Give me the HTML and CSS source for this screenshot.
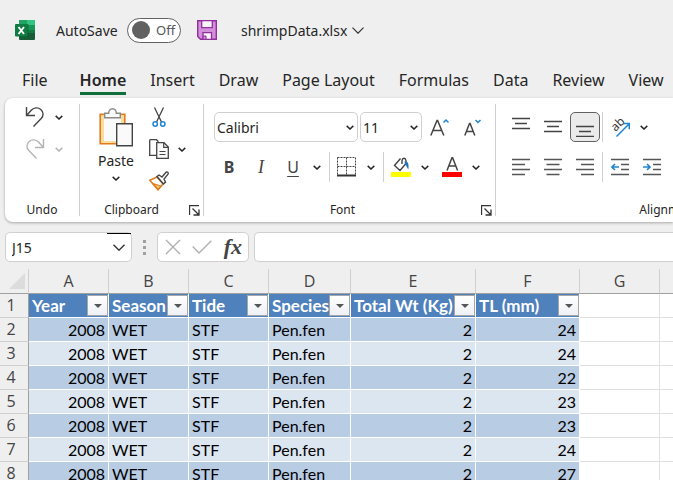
FILE: index.html
```html
<!DOCTYPE html>
<html lang="en">
<head>
<meta charset="utf-8">
<title>shrimpData.xlsx</title>
<link rel="stylesheet" href="styles.css">
</head>
<body>
<svg class="defs" aria-hidden="true">
  <symbol id="chev" viewBox="0 0 8 5"><path d="M.7.9 4 4 7.3.9" fill="none" stroke="currentColor" stroke-width="1.5"/></symbol>
  <symbol id="launch" viewBox="0 0 11 11"><path d="M.5 10V.5H10M3.5 3.5l6 6M10 4.500V10H4.500" fill="none" stroke="#333" stroke-width="1.300"/></symbol>
</svg>

<header class="titlebar">
  <svg class="logo" width="20" height="20" viewBox="0 0 20 20">
    <rect x="4" y="0" width="16" height="20" rx="1" fill="#185c37"/>
    <path d="M4 1a1 1 0 0 1 1-1h7v5.500H4z" fill="#21a366"/>
    <path d="M12 0h7a1 1 0 0 1 1 1v4.500h-8z" fill="#33c481"/>
    <path d="M4 5.500h8V13H4z" fill="#107c41"/>
    <path d="M12 5.500h8V13h-8z" fill="#17965a"/>
    <path d="M12 10h8v3h-8z" fill="#107c41"/>
    <path d="M4 4h9.500v13H4z" fill="#0b4a2b" opacity=".5"/>
    <rect x="0" y="4" width="12.500" height="12.500" rx="1" fill="#107c41"/>
    <path d="M3.500 7l5.500 7M9 7l-5.500 7" stroke="#fff" stroke-width="1.900" fill="none"/>
  </svg>
  <label class="autosave" for="autosave">AutoSave</label>
  <span class="toggle"><input id="autosave" type="checkbox" role="switch"><span class="toggle-text">Off</span></span>
  <button class="save" aria-label="Save">
    <svg width="20" height="20" viewBox="0 0 20 20">
      <path d="M.7.7h18.600v18.600H3.500L.7 16.500z" fill="#d48fdb" stroke="#922f9e" stroke-width="1.400"/>
      <path d="M4.700.7h10.600v7H4.700z" fill="#f7f3f8" stroke="#922f9e" stroke-width="1.300"/>
      <path d="M6 19.300v-6.600h8.500v6.600z" fill="#f7f3f8" stroke="#922f9e" stroke-width="1.300"/>
      <path d="M6 16h3v3.300H6z" fill="#d48fdb" stroke="#922f9e" stroke-width="1"/>
    </svg>
  </button>
  <button class="filename">shrimpData.xlsx
    <svg width="12" height="7" viewBox="0 0 12 7"><path d="M.5.700 6 6.200 11.500.7" fill="none" stroke="#333" stroke-width="1.200"/></svg>
  </button>
</header>

<nav class="tabs">
  <a class="tab file" href="#file">File</a>
  <a class="tab active" href="#home">Home</a>
  <a class="tab" href="#insert">Insert</a>
  <a class="tab" href="#draw">Draw</a>
  <a class="tab" href="#layout">Page Layout</a>
  <a class="tab" href="#formulas">Formulas</a>
  <a class="tab" href="#data">Data</a>
  <a class="tab" href="#review">Review</a>
  <a class="tab" href="#view">View</a>
</nav>

<section class="ribbon">
  <div class="group undo">
    <div class="body stack">
      <div class="row">
        <button class="tool" aria-label="Undo"><svg width="20" height="22" viewBox="0 0 20 22"><path d="M1.500 1v8.500H10M1.500 9.500 6.500 4C9 1.500 13 1 15.800 3.500c3 2.700 2.900 6.500.4 9L8.500 20.500" fill="none" stroke="#444" stroke-width="1.400"/></svg></button>
        <button class="drop" aria-label="Undo list"><svg width="8" height="5"><use href="#chev"/></svg></button>
      </div>
      <div class="row faded">
        <button class="tool" aria-label="Redo"><svg width="20" height="22" viewBox="0 0 20 22"><path d="M18.500 1v8.500H10M18.500 9.500 13.500 4C11 1.500 7 1 4.200 3.500c-3 2.700-2.900 6.500-.4 9L11.500 20.500" fill="none" stroke="currentColor" stroke-width="1.400"/></svg></button>
        <button class="drop" aria-label="Redo list"><svg width="8" height="5"><use href="#chev"/></svg></button>
      </div>
    </div>
    <div class="foot"><span class="caption">Undo</span></div>
  </div>

  <div class="group clipboard">
    <div class="body clip">
      <button class="paste">
        <svg width="34" height="39" viewBox="0 0 34 39">
          <path d="M1.200 6.200h24.600v29.600H1.200z" fill="#fbdc9b" stroke="#e07b1f" stroke-width="1.600"/>
          <path d="M5 8h17v25H5z" fill="#fafafa"/>
          <path d="M5.700 9.800V5.200h4c0-2.400 1.500-4.500 3.800-4.500s3.800 2.100 3.800 4.500h4v4.600z" fill="#fafafa" stroke="#8a8a8a" stroke-width="1.400"/>
          <path d="M17.700 15.700h15.600v22H17.700z" fill="#fafafa" stroke="#444" stroke-width="1.400"/>
        </svg>
        <span>Paste</span>
        <svg width="8" height="5"><use href="#chev"/></svg>
      </button>
      <div class="stack">
        <div class="row">
          <button class="tool" aria-label="Cut"><svg width="14" height="20" viewBox="0 0 14 20"><path d="M2.500.5 9.500 15M11.500.5 4.500 15" fill="none" stroke="#444" stroke-width="1.300"/><circle cx="3.200" cy="17" r="2.200" fill="#fff" stroke="#1e86d0" stroke-width="1.500"/><circle cx="10.800" cy="17" r="2.200" fill="#fff" stroke="#1e86d0" stroke-width="1.500"/></svg></button>
        </div>
        <div class="row">
          <button class="tool" aria-label="Copy"><svg width="20" height="20" viewBox="0 0 20 20"><path d="M.7.700h6.300M.7.700V16.300H7M7 .7h.5l2 2" fill="none" stroke="#444" stroke-width="1.300"/><path d="M7.700 3.700h7.300l4.300 4.300v11.300H7.700z" fill="#fafafa" stroke="#444" stroke-width="1.300"/><path d="M14.700 4v4.300h4.600M10.500 12.500h6M10.500 15.500h6" fill="none" stroke="#444" stroke-width="1.200"/></svg></button>
          <button class="drop" aria-label="Copy options"><svg width="8" height="5"><use href="#chev"/></svg></button>
        </div>
        <div class="row">
          <button class="tool" aria-label="Format Painter"><svg width="20" height="20" viewBox="0 0 20 20"><path d="M8 6 .8 9.200 9 18.800l5-5.800z" fill="#fff" stroke="#e07b1f" stroke-width="1.500"/><path d="M4 12.500 11.800 15 9 18.500z" fill="#fbc96f" stroke="#e07b1f" stroke-width="1.200"/><path d="M8 5.500 10 4l3 2 4-4.800c1.500-.8 2.800.6 2 2L15 8l1.500 3-2 2z" fill="#fff" stroke="#444" stroke-width="1.400"/></svg></button>
        </div>
      </div>
    </div>
    <div class="foot"><span class="caption">Clipboard</span><button class="launcher" aria-label="Clipboard settings"><svg width="11" height="11"><use href="#launch"/></svg></button></div>
  </div>

  <div class="group font">
    <div class="body lines">
      <div class="row">
        <label class="combo wide"><select aria-label="Font"><option>Calibri</option></select><svg width="8" height="5"><use href="#chev"/></svg></label>
        <label class="combo"><select aria-label="Font size"><option>11</option></select><svg width="8" height="5"><use href="#chev"/></svg></label>
        <button class="tool sizer" aria-label="Increase Font Size"><svg width="20" height="18" viewBox="0 0 20 18"><path d="M.8 17.500 7 2.500h.6l6.200 15M3 12.500h8.600" fill="none" stroke="#444" stroke-width="1.500"/><path d="M13.500 4.500 16 2l2.500 2.500" fill="none" stroke="#1e86d0" stroke-width="1.500"/></svg></button>
        <button class="tool sizer" aria-label="Decrease Font Size"><svg width="18" height="18" viewBox="0 0 18 18"><path d="M.8 17.500 5.500 5.500h.6l4.700 12M2.500 13.500h6.600" fill="none" stroke="#444" stroke-width="1.500"/><path d="M11.500 2 14 4.500 16.500 2" fill="none" stroke="#1e86d0" stroke-width="1.500"/></svg></button>
      </div>
      <div class="row">
        <button class="tool letter bold">B</button>
        <button class="tool letter italic">I</button>
        <button class="tool letter under">U</button>
        <button class="drop" aria-label="Underline styles"><svg width="8" height="5"><use href="#chev"/></svg></button>
        <span class="sep gap"></span>
        <button class="tool" aria-label="Borders"><svg width="20" height="20" viewBox="0 0 20 20"><path d="M.5.5h18M.5 9.500h18M.5.5v17M9.500.5v17M18.500.5v17" fill="none" stroke="#444" stroke-dasharray="2 1"/><path d="M0 18.500h19" stroke="#333" stroke-width="2"/></svg></button>
        <button class="drop" aria-label="Border styles"><svg width="8" height="5"><use href="#chev"/></svg></button>
        <span class="sep gap"></span>
        <button class="tool" aria-label="Fill Color"><svg width="20" height="20" viewBox="0 0 20 20"><path d="M0 15h20v5H0z" fill="#ff0"/><path d="M9.500 1.500 3.500 8.500l5.500 5 6-7V3.500c-.5-3-3.500-3-4 0v3.500" fill="#fff" stroke="#444" stroke-width="1.400"/><path d="M13.500 4.500c3-.2 4 1.500 4 3.500v4c-1.700-.5-1.500-3.500-3.500-4.500z" fill="#1e74bc"/></svg></button>
        <button class="drop" aria-label="Fill colors"><svg width="8" height="5"><use href="#chev"/></svg></button>
        <button class="tool color" aria-label="Font Color"><svg width="20" height="20" viewBox="0 0 20 20"><path d="M0 15h20v5H0z" fill="#f00"/><path d="M5 13.500 10 .700h.6l5 12.800M7 9h6.600" fill="none" stroke="#444" stroke-width="1.500"/></svg></button>
        <button class="drop" aria-label="Font colors"><svg width="8" height="5"><use href="#chev"/></svg></button>
      </div>
    </div>
    <div class="foot"><span class="caption">Font</span><button class="launcher" aria-label="Font settings"><svg width="11" height="11"><use href="#launch"/></svg></button></div>
  </div>

  <div class="group align">
    <div class="body lines">
      <div class="row">
        <button class="tool" aria-label="Top Align"><svg width="18" height="20" viewBox="0 0 18 20"><path d="M0 1.500h18M3 6.500h12M0 11.500h18" stroke="#444" stroke-width="1.300"/></svg></button>
        <button class="tool" aria-label="Middle Align"><svg width="18" height="20" viewBox="0 0 18 20"><path d="M0 4.500h18M3 9.500h12M0 14.500h18" stroke="#444" stroke-width="1.300"/></svg></button>
        <button class="tool pressed" aria-label="Bottom Align" aria-pressed="true"><svg width="18" height="20" viewBox="0 0 18 20"><path d="M0 9.500h18M3 14.500h12M0 19.500h18" stroke="#444" stroke-width="1.300"/></svg></button>
        <span class="sep"></span>
        <button class="tool" aria-label="Orientation"><svg class="orient" width="20" height="20" viewBox="0 0 20 20"><text class="ab" transform="translate(5.500 15) rotate(-45)">ab</text><path d="M6.500 19.500 19 7M13.500 6.500H19.300V12.300" fill="none" stroke="#1e86d0" stroke-width="1.500"/></svg></button>
        <button class="drop" aria-label="Orientation options"><svg width="8" height="5"><use href="#chev"/></svg></button>
      </div>
      <div class="row">
        <button class="tool" aria-label="Align Left"><svg width="18" height="18" viewBox="0 0 18 18"><path d="M0 1.500h18M0 6.500h13M0 11.500h18M0 16.500h13" stroke="#555" stroke-width="1.500"/></svg></button>
        <button class="tool" aria-label="Center"><svg width="18" height="18" viewBox="0 0 18 18"><path d="M0 1.500h18M2.500 6.500h13M0 11.500h18M2.500 16.500h13" stroke="#555" stroke-width="1.500"/></svg></button>
        <button class="tool" aria-label="Align Right"><svg width="18" height="18" viewBox="0 0 18 18"><path d="M0 1.500h18M5 6.500h13M0 11.500h18M5 16.500h13" stroke="#555" stroke-width="1.500"/></svg></button>
        <span class="sep"></span>
        <button class="tool" aria-label="Decrease Indent"><svg width="18" height="18" viewBox="0 0 18 18"><path d="M0 1.500h18M10 6.500h8M10 11.500h8M0 16.500h18" stroke="#555" stroke-width="1.500"/><path d="M8 9H1M4 6 1 9l3 3" fill="none" stroke="#1e86d0" stroke-width="1.600"/></svg></button>
        <button class="tool" aria-label="Increase Indent"><svg width="18" height="18" viewBox="0 0 18 18"><path d="M0 1.500h18M10 6.500h8M10 11.500h8M0 16.500h18" stroke="#555" stroke-width="1.500"/><path d="M0 9h7M4 6l3 3-3 3" fill="none" stroke="#1e86d0" stroke-width="1.600"/></svg></button>
      </div>
    </div>
    <div class="foot"><span class="caption">Alignment</span></div>
  </div>
</section>

<section class="formulabar">
  <div class="namebox">
    <input type="text" value="J15" aria-label="Name Box">
    <button aria-label="Named ranges"><svg width="12" height="7" viewBox="0 0 12 7"><path d="M.5.700 6 6.200 11.500.7" fill="none" stroke="#333" stroke-width="1.400"/></svg></button>
  </div>
  <span class="grip"><i></i><i></i><i></i></span>
  <div class="entry">
    <button aria-label="Cancel"><svg width="16" height="16" viewBox="0 0 16 16"><path d="M1 1l14 14M15 1 1 15" stroke="#b0b0b0" stroke-width="1.400"/></svg></button>
    <button aria-label="Enter"><svg width="20" height="14" viewBox="0 0 20 14"><path d="M.7 6.500 7 13 19.300.7" fill="none" stroke="#b0b0b0" stroke-width="1.400"/></svg></button>
    <button class="fx" aria-label="Insert Function"><i>fx</i></button>
  </div>
  <input class="formula" type="text" aria-label="Formula Bar">
</section>

<main class="sheet">
  <table>
    <colgroup><col class="c-head"><col class="c-std"><col class="c-std"><col class="c-std"><col class="c-d"><col class="c-e"><col class="c-f"><col class="c-std"><col class="c-std"></colgroup>
    <thead>
      <tr><th class="corner"><svg width="16" height="16" viewBox="0 0 16 16"><path d="M16 0v16H0z" fill="#dcdcdc"/></svg></th><th>A</th><th>B</th><th>C</th><th>D</th><th>E</th><th>F</th><th>G</th><th></th></tr>
    </thead>
    <tbody>
      <tr class="fields"><th>1</th>
        <td><div>Year<button aria-label="Filter Year"></button></div></td>
        <td><div>Season<button aria-label="Filter Season"></button></div></td>
        <td><div>Tide<button aria-label="Filter Tide"></button></div></td>
        <td><div>Species<button aria-label="Filter Species"></button></div></td>
        <td><div>Total Wt (Kg)<button aria-label="Filter Total Wt"></button></div></td>
        <td><div>TL (mm)<button aria-label="Filter TL"></button></div></td>
        <td class="blank"></td><td class="blank"></td></tr>
      <tr class="dark"><th>2</th><td class="num">2008</td><td>WET</td><td>STF</td><td>Pen.fen</td><td class="num">2</td><td class="num">24</td><td class="blank"></td><td class="blank"></td></tr>
      <tr><th>3</th><td class="num">2008</td><td>WET</td><td>STF</td><td>Pen.fen</td><td class="num">2</td><td class="num">24</td><td class="blank"></td><td class="blank"></td></tr>
      <tr class="dark"><th>4</th><td class="num">2008</td><td>WET</td><td>STF</td><td>Pen.fen</td><td class="num">2</td><td class="num">22</td><td class="blank"></td><td class="blank"></td></tr>
      <tr><th>5</th><td class="num">2008</td><td>WET</td><td>STF</td><td>Pen.fen</td><td class="num">2</td><td class="num">23</td><td class="blank"></td><td class="blank"></td></tr>
      <tr class="dark"><th>6</th><td class="num">2008</td><td>WET</td><td>STF</td><td>Pen.fen</td><td class="num">2</td><td class="num">23</td><td class="blank"></td><td class="blank"></td></tr>
      <tr><th>7</th><td class="num">2008</td><td>WET</td><td>STF</td><td>Pen.fen</td><td class="num">2</td><td class="num">24</td><td class="blank"></td><td class="blank"></td></tr>
      <tr class="dark"><th>8</th><td class="num">2008</td><td>WET</td><td>STF</td><td>Pen.fen</td><td class="num">2</td><td class="num">27</td><td class="blank"></td><td class="blank"></td></tr>
    </tbody>
  </table>
</main>
</body>
</html>
```
FILE: styles.css
```css
* { box-sizing: border-box; }

body {
  margin: 0;
  height: 100vh;
  display: flex;
  flex-direction: column;
  overflow: hidden;
  background: #efefef;
  color: #262626;
  font-family: "Noto Sans", "Open Sans", sans-serif;
  font-size: 14px;
}

button, input, select {
  margin: 0;
  padding: 0;
  border: 0;
  background: none;
  color: inherit;
  font: inherit;
}

svg { display: block; flex: none; }
.defs { position: absolute; width: 0; height: 0; }

/* Title bar */
.titlebar {
  flex: none;
  display: flex;
  align-items: center;
  height: 60px;
  padding-left: 15px;
  white-space: nowrap;
}
.autosave { margin-left: 21px; width: 71px; }
.toggle {
  display: flex;
  align-items: center;
  width: 54px;
  height: 25px;
  padding-left: 4px;
  border: 1px solid #616161;
  border-radius: 13px;
  background: #fff;
  color: #555;
}
.toggle input {
  appearance: none;
  width: 18px;
  height: 18px;
  border-radius: 50%;
  background: #616161;
}
.toggle-text { margin-left: 6px; font-size: 13px; }
.save { margin-left: 16px; }
.filename { display: flex; align-items: center; gap: 5px; margin-left: 24px; }

/* Tabs */
.tabs {
  flex: none;
  display: flex;
  gap: 24px;
  height: 38px;
  padding-left: 22px;
  font-size: 16px;
  line-height: 22px;
  white-space: nowrap;
}
.tab {
  height: 35px;
  padding-top: 9px;
  color: inherit;
  text-decoration: none;
}
.file { margin-right: 8px; }
.active { border-bottom: 3px solid #0f703b; font-weight: 600; }

/* Ribbon */
.ribbon {
  flex: none;
  display: flex;
  margin-left: 5px;
  padding: 6px 0;
  border-radius: 8px 0 0 8px;
  background: #fff;
  box-shadow: 0 1px 3px rgba(0, 0, 0, .3);
  overflow: visible;
}
.group {
  flex: none;
  display: flex;
  flex-direction: column;
  border-right: 1px solid #d0d0d0;
}
.undo { width: 75px; }
.clipboard { width: 124px; }
.font { width: 292px; }
.align { width: 346px; }
.body { height: 100px; }
.row { display: flex; align-items: center; }
.stack { display: flex; flex-direction: column; gap: 6px; }
.stack .row { height: 26px; }
.undo .stack { padding-left: 14px; }
.faded { color: #b3b3b3; }
.tool {
  display: flex;
  align-items: center;
  justify-content: center;
  width: 32px;
  height: 30px;
}
.drop {
  display: flex;
  align-items: center;
  justify-content: center;
  width: 16px;
  height: 30px;
}
.foot { display: flex; height: 12px; font-size: 12px; line-height: 12px; }
.caption { flex: 1; text-align: center; }
.launcher { width: 14px; height: 12px; }

.clip { display: flex; }
.paste {
  display: flex;
  flex-direction: column;
  align-items: center;
  width: 64px;
  padding: 4px 0 0 8px;
  line-height: 20px;
}
.paste span { padding: 4px 0 5px; }
.clip .drop { margin-left: -1px; }
.clip .stack { margin-left: -1px; }
.clip + .foot .caption { padding-right: 6px; }

.lines { display: flex; flex-direction: column; gap: 10px; padding: 8px 0 0 9px; }
.lines .row { height: 30px; }
.combo {
  display: flex;
  align-items: center;
  width: 62px;
  height: 30px;
  margin-left: 2px;
  padding: 0 3px 0 2px;
  border: 1px solid #d0d0d0;
  border-radius: 5px;
}
.combo.wide { width: 144px; margin-left: 1px; }
.combo select { appearance: none; flex: 1; min-width: 0; }
.sizer { margin-left: 2px; }
.sizer + .sizer { margin-left: 1px; }
.letter { color: #444; font-size: 16px; }
.bold { font-weight: 700; }
.italic { font-family: "Liberation Serif", serif; font-size: 18px; font-style: italic; }
.under { text-decoration: underline; text-underline-offset: 3px; }
.sep { width: 1px; height: 30px; margin: 0 1px; background: #d0d0d0; }
.gap { margin-left: 4px; }
.color { margin-left: 3px; }
.orient { overflow: visible; }
.ab { font-size: 12px; fill: #333; }
.pressed {
  width: 30px;
  margin: 0 1px;
  border: 1px solid #616161;
  border-radius: 5px;
  background: #ebebeb;
}

/* Formula bar */
.formulabar {
  flex: none;
  display: flex;
  align-items: center;
  padding: 10px 0 7px 5px;
}
.namebox, .entry, .formula {
  height: 30px;
  border: 1px solid #d0d0d0;
  border-radius: 5px;
  background: #fff;
}
.namebox { display: flex; width: 127px; }
.namebox input { flex: 1; min-width: 0; padding-left: 6px; }
.namebox button {
  display: flex;
  align-items: center;
  justify-content: center;
  width: 24px;
  border-top: 1px solid #000;
}
.grip { display: flex; flex-direction: column; gap: 3px; margin: 0 11px; }
.grip i { width: 3px; height: 3px; background: #a0a0a0; }
.entry {
  display: flex;
  align-items: center;
  justify-content: space-between;
  width: 92px;
  padding: 0 6px 0 7px;
}
.fx { font-family: "Liberation Serif", serif; font-size: 22px; font-weight: 700; line-height: 24px; color: #444; }
.formula { flex: 1; min-width: 0; margin-left: 5px; border-right: 0; border-radius: 5px 0 0 5px; }

/* Sheet */
.sheet { flex: 1; min-height: 0; overflow: hidden; }
table {
  width: 0;
  table-layout: fixed;
  border-collapse: separate;
  border-spacing: 0;
  font-family: Lato, sans-serif;
  font-size: 16px;
  line-height: 23px;
  color: #000;
}
.c-head { width: 29px; }
.c-std { width: 80px; }
.c-d { width: 82px; }
.c-e { width: 125px; }
.c-f { width: 104px; }
th {
  height: 24px;
  padding: 0;
  border-right: 1px solid #d0d0d0;
  border-bottom: 1px solid #d0d0d0;
  background: #efefef;
  color: #444;
  font-family: "Open Sans", sans-serif;
  font-weight: 400;
}
thead th { height: 25px; border-bottom-color: #a0a0a0; }
tbody th { padding-right: 6px; border-right-color: #a0a0a0; }
.corner svg { margin-left: 9px; }
td {
  height: 24px;
  padding: 0 3px;
  border-right: 1px solid #fff;
  border-bottom: 1px solid #fff;
  background: #dce6f1;
  white-space: nowrap;
}
.dark td { background: #b8cce4; }
.num { text-align: right; }
.fields td { padding-right: 0; background: #4f81bd; color: #fff; font-size: 17px; font-weight: 700; }
.fields div { display: flex; height: 23px; overflow: hidden; }
.fields button {
  flex: none;
  display: grid;
  place-items: center;
  width: 21px;
  height: 21px;
  margin: 1px 0 0 auto;
  border: 1px solid #a6a6a6;
  background: linear-gradient(#fff, #eef0f5);
}
.fields button::before {
  content: "";
  border: 4px solid transparent;
  border-top-color: #555;
  border-bottom: 0;
}
.fields td.blank, td.blank { border-color: #e0e0e0; background: #fff; }
.dark td.blank { background: #fff; }
```
